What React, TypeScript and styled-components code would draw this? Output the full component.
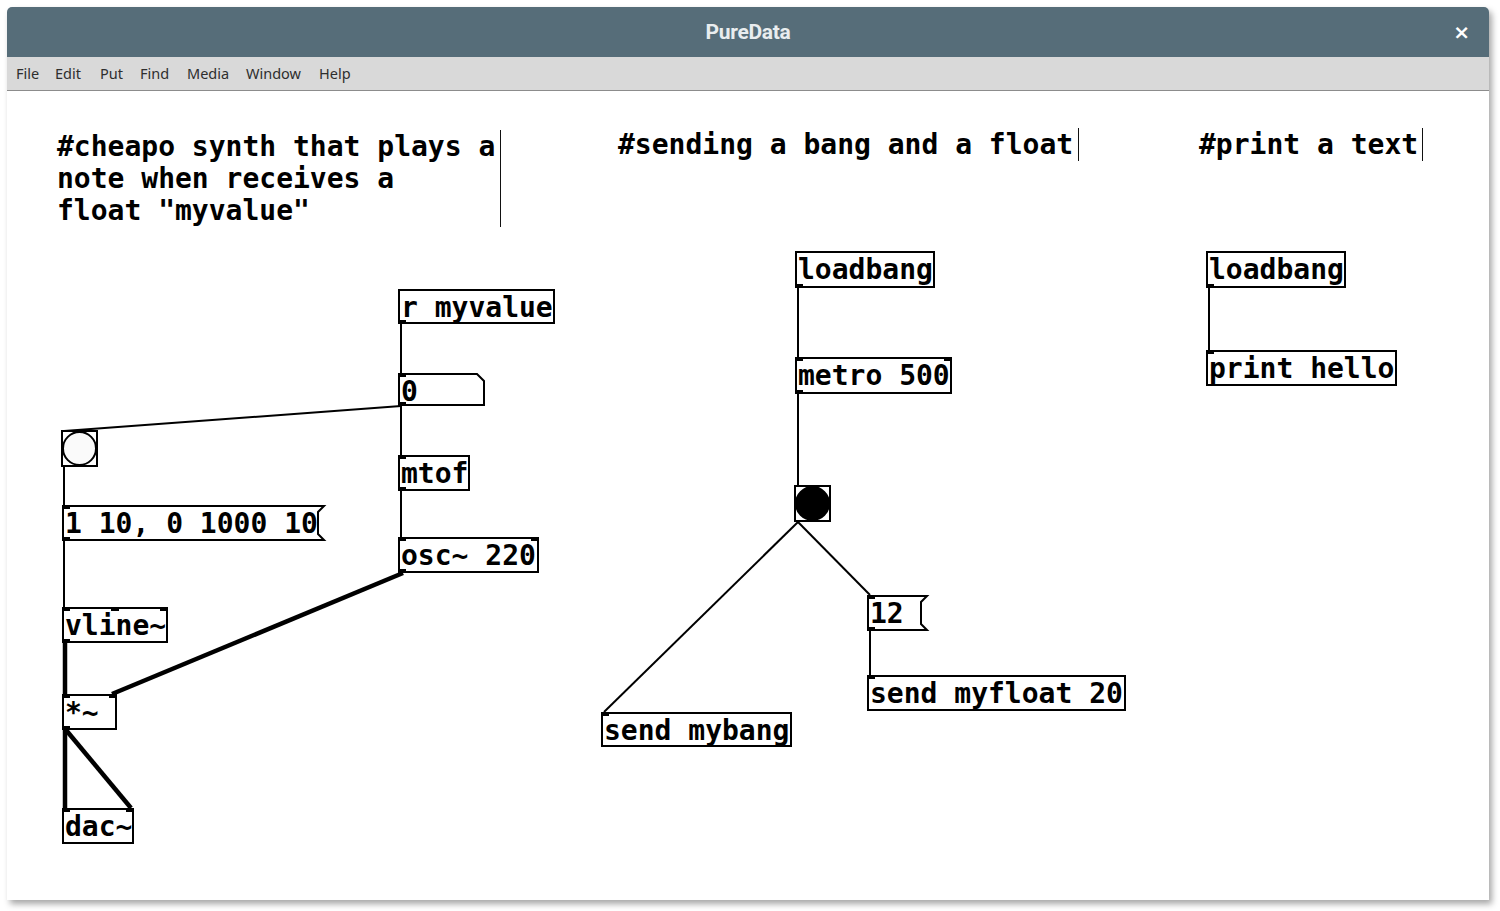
import styled, { createGlobalStyle } from "styled-components";

type Kind = "obj" | "msg" | "num" | "bng";
type PortPos = "left" | "mid" | "right";

type PdNode = {
  x: number;
  y: number;
  w: number;
  h: number;
  kind: Kind;
  text?: string;
  inlets?: PortPos[];
  outlets?: PortPos[];
  filled?: boolean;
};

type Wire = [number, number, number, number, boolean?];

// canvas origin in page coordinates
const OX = 7;
const OY = 91;

const nodes: PdNode[] = [
  { x: 398, y: 289, w: 157, h: 35, kind: "obj", text: "r myvalue", outlets: ["left"] },
  { x: 398, y: 373, w: 87, h: 33, kind: "num", text: "0", inlets: ["left"], outlets: ["left"] },
  { x: 61, y: 430, w: 37, h: 37, kind: "bng" },
  { x: 62, y: 505, w: 263, h: 36, kind: "msg", text: "1 10, 0 1000 10", inlets: ["left"], outlets: ["left"] },
  { x: 398, y: 455, w: 72, h: 36, kind: "obj", text: "mtof", inlets: ["left"], outlets: ["left"] },
  { x: 398, y: 537, w: 141, h: 36, kind: "obj", text: "osc~ 220", inlets: ["left", "right"], outlets: ["left"] },
  { x: 62, y: 607, w: 106, h: 36, kind: "obj", text: "vline~", inlets: ["left", "mid", "right"], outlets: ["left"] },
  { x: 62, y: 694, w: 55, h: 36, kind: "obj", text: "*~", inlets: ["left", "right"], outlets: ["left"] },
  { x: 62, y: 808, w: 72, h: 36, kind: "obj", text: "dac~", inlets: ["left", "right"] },
  { x: 795, y: 251, w: 140, h: 37, kind: "obj", text: "loadbang", outlets: ["left"] },
  { x: 795, y: 357, w: 157, h: 37, kind: "obj", text: "metro 500", inlets: ["left", "right"], outlets: ["left"] },
  { x: 794, y: 485, w: 37, h: 37, kind: "bng", filled: true },
  { x: 867, y: 595, w: 61, h: 36, kind: "msg", text: "12", inlets: ["left"], outlets: ["left"] },
  { x: 867, y: 675, w: 259, h: 36, kind: "obj", text: "send myfloat 20", inlets: ["left"] },
  { x: 601, y: 712, w: 191, h: 35, kind: "obj", text: "send mybang", inlets: ["left"] },
  { x: 1206, y: 251, w: 140, h: 37, kind: "obj", text: "loadbang", outlets: ["left"] },
  { x: 1206, y: 350, w: 191, h: 36, kind: "obj", text: "print hello", inlets: ["left"] },
];

// [x1, y1, x2, y2, signal]
const wires: Wire[] = [
  [401, 324, 401, 373],
  [401, 406, 64, 431],
  [401, 406, 401, 455],
  [64, 467, 64, 505],
  [401, 491, 401, 537],
  [64, 541, 64, 607],
  [403, 573, 112, 694, true],
  [65, 643, 65, 694, true],
  [65, 730, 65, 808, true],
  [66, 730, 131, 808, true],
  [798, 288, 798, 357],
  [798, 394, 798, 485],
  [798, 522, 604, 712],
  [798, 522, 870, 595],
  [870, 631, 870, 675],
  [1209, 288, 1209, 350],
];

const comments = [
  { x: 57, y: 130, lines: ["#cheapo synth that plays a", "note when receives a", "float \"myvalue\""], w: 444 },
  { x: 618, y: 128, lines: ["#sending a bang and a float"], w: 461 },
  { x: 1199, y: 128, lines: ["#print a text"], w: 224 },
];

const GlobalStyle = createGlobalStyle`
  html, body {
    margin: 0;
    padding: 0;
    background: #ffffff;
  }
  body {
    width: 1500px;
    height: 911px;
    overflow: hidden;
  }
`;

const Window = styled.div`
  margin: 7px 0 0 7px;
  width: 1482px;
  height: 893px;
  display: flex;
  flex-direction: column;
  background: #ffffff;
  border-radius: 5px 5px 0 0;
  box-shadow: 3px 4px 6px rgba(0, 0, 0, 0.35);
  overflow: hidden;
`;

const TitleBar = styled.div`
  height: 50px;
  flex: none;
  background: #566d79;
  display: flex;
  align-items: center;
  justify-content: center;
  position: relative;
`;

const Title = styled.div`
  font-family: Roboto, "Noto Sans", sans-serif;
  font-weight: 700;
  font-size: 21px;
  color: #e9edef;
  letter-spacing: -0.3px;
`;

const CloseButton = styled.div`
  position: absolute;
  right: 19px;
  top: 13px;
  font-family: "DejaVu Sans", sans-serif;
  font-weight: 700;
  font-size: 20px;
  color: #ffffff;
`;

const MenuBar = styled.div`
  height: 34px;
  flex: none;
  box-sizing: border-box;
  background: #d9d9d9;
  border-bottom: 1px solid #8c8c8c;
  display: flex;
  align-items: center;
  padding: 0 0 2px 9px;
  font-family: "Noto Sans", sans-serif;
  font-size: 14.5px;
  color: #2e2e2e;
`;

const MenuItem = styled.span<{ $w: number }>`
  width: ${(p) => p.$w}px;
`;

const Canvas = styled.div`
  flex: 1;
  position: relative;
`;

const WireLayer = styled.svg`
  position: absolute;
  inset: 0;
  width: 100%;
  height: 100%;
`;

const monoText = `
  font-family: "DejaVu Sans Mono", "Liberation Mono", monospace;
  font-weight: 700;
  font-size: 28px;
  color: #000000;
  white-space: pre;
`;

const Comment = styled.div`
  position: absolute;
  box-sizing: border-box;
  ${monoText}
  line-height: 32px;
  padding-top: 1px;
  border-right: 1px solid #111;
`;

const NodeBox = styled.div<{ $kind: Kind }>`
  position: absolute;
  box-sizing: border-box;
  ${monoText}
  line-height: 31px;
  padding: 3px 3px 0 3px;
  box-shadow: ${(p) => (p.$kind === "obj" ? "inset 0 0 0 2px #000" : "none")};
`;

const Outline = styled.svg`
  position: absolute;
  inset: 0;
  overflow: visible;
`;

const Port = styled.div<{ $edge: "top" | "bottom"; $pos: PortPos }>`
  position: absolute;
  width: 8px;
  height: 4px;
  background: #000;
  ${(p) => (p.$edge === "top" ? "top: 0;" : "bottom: 0;")}
  ${(p) =>
    p.$pos === "left"
      ? "left: 0;"
      : p.$pos === "right"
      ? "right: 0;"
      : "left: calc(50% - 4px);"}
`;

const Node = ({ node }: { node: PdNode }) => {
  const { w, h } = node;
  let outline = null;
  if (node.kind === "msg") {
    outline = (
      <Outline width={w} height={h}>
        <polygon
          points={`1,1 ${w - 1},1 ${w - 7},7 ${w - 7},${h - 7} ${w - 1},${h - 1} 1,${h - 1}`}
          fill="none"
          stroke="#000"
          strokeWidth={2}
        />
      </Outline>
    );
  } else if (node.kind === "num") {
    outline = (
      <Outline width={w} height={h}>
        <polygon
          points={`1,1 ${w - 8},1 ${w - 1},8 ${w - 1},${h - 1} 1,${h - 1}`}
          fill="none"
          stroke="#000"
          strokeWidth={2}
        />
      </Outline>
    );
  } else if (node.kind === "bng") {
    outline = (
      <Outline width={w} height={h}>
        <rect x={1} y={1} width={w - 2} height={h - 2} fill="#fff" stroke="#000" strokeWidth={2} />
        <circle
          cx={w / 2}
          cy={h / 2}
          r={w / 2 - 2}
          fill={node.filled ? "#000" : "#fafafa"}
          stroke="#000"
          strokeWidth={2}
        />
      </Outline>
    );
  }
  return (
    <NodeBox
      $kind={node.kind}
      style={{ left: node.x - OX, top: node.y - OY, width: w, height: h }}
    >
      {outline}
      {node.text}
      {node.inlets?.map((p) => <Port key={"i" + p} $edge="top" $pos={p} />)}
      {node.outlets?.map((p) => <Port key={"o" + p} $edge="bottom" $pos={p} />)}
    </NodeBox>
  );
};

// menu label and the slot it takes in the bar
const menus: [string, number][] = [
  ["File", 39],
  ["Edit", 45],
  ["Put", 40],
  ["Find", 47],
  ["Media", 59],
  ["Window", 73],
  ["Help", 40],
];

const App = () => {
  return (
    <>
      <GlobalStyle />
      <Window>
        <TitleBar>
          <Title>PureData</Title>
          <CloseButton>×</CloseButton>
        </TitleBar>
        <MenuBar>
          {menus.map(([m, w]) => (
            <MenuItem key={m} $w={w}>
              {m}
            </MenuItem>
          ))}
        </MenuBar>
        <Canvas>
          <WireLayer>
            {wires.map(([x1, y1, x2, y2, sig], i) => (
              <line
                key={i}
                x1={x1 - OX}
                y1={y1 - OY}
                x2={x2 - OX}
                y2={y2 - OY}
                stroke="#000"
                strokeWidth={sig ? 4.5 : 2}
              />
            ))}
          </WireLayer>
          {comments.map((c, i) => (
            <Comment key={i} style={{ left: c.x - OX, top: c.y - OY, width: c.w }}>
              {c.lines.join("\n")}
            </Comment>
          ))}
          {nodes.map((n, i) => (
            <Node key={i} node={n} />
          ))}
        </Canvas>
      </Window>
    </>
  );
};

export default App;
